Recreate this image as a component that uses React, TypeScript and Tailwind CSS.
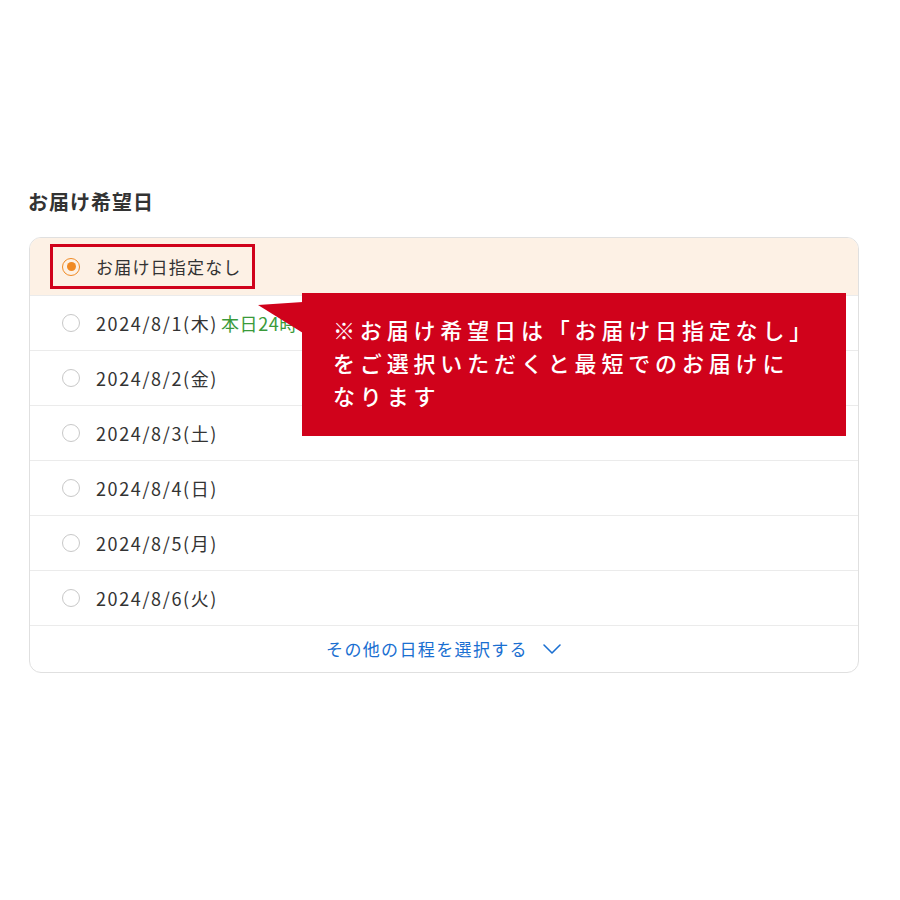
const dates = [
  { label: '2024/8/1(木)', note: '本日24時までのご注文で当日発送' },
  { label: '2024/8/2(金)' },
  { label: '2024/8/3(土)' },
  { label: '2024/8/4(日)' },
  { label: '2024/8/5(月)' },
  { label: '2024/8/6(火)' },
];

function Radio({ checked }: { checked?: boolean }) {
  if (checked) {
    return (
      <span className="w-[18px] h-[18px] rounded-full border-[1.5px] border-[#f08a24] flex items-center justify-center shrink-0">
        <span className="w-[9px] h-[9px] rounded-full bg-[#f08a24]" />
      </span>
    );
  }
  return <span className="w-[18px] h-[18px] rounded-full border-[1.5px] border-[#c8c8c8] shrink-0" />;
}

export default function App() {
  return (
    <div
      className="w-[900px] h-[900px] bg-white text-[#333]"
      style={{ fontFamily: '"Noto Sans CJK JP", "Noto Sans", sans-serif' }}
    >
      <div className="pt-[188px] pl-[28px] pr-[41px]">
        {/* Heading */}
        <h2 className="text-[20px] font-bold leading-[28px] tracking-[0.05em] text-[#333]">お届け希望日</h2>

        <div className="relative mt-[21px] ml-px">
          {/* Card */}
          <div className="rounded-[12px] border border-[#e0e0e0] overflow-hidden">
            <div className="h-[58px] bg-[#fdf1e5] flex items-center pl-5 border-b border-[#ebebeb]">
              <label className="h-[45px] w-[205px] border-[3px] border-[#d0021b] flex items-center pl-[9px] gap-[16px]">
                <Radio checked />
                <span className="text-[17px] tracking-[0.07em]">お届け日指定なし</span>
              </label>
            </div>

            {dates.map((d) => (
              <div key={d.label} className="h-[55px] flex items-center pl-[32px] gap-[16px] border-b border-[#ebebeb]">
                <Radio />
                <span className="text-[18px] tracking-[0.09em] whitespace-nowrap flex items-center">
                  {d.label}
                  {d.note && (
                    <span className="ml-[3px] w-[80px] tracking-[0.03em] overflow-hidden text-[#3a9a3a]">{d.note}</span>
                  )}
                </span>
              </div>
            ))}

            <div className="h-[46px] flex items-center justify-center gap-[14px] text-[#1a6fd1]">
              <span className="text-[17px] tracking-[0.08em]">その他の日程を選択する</span>
              <svg width="20" height="12" viewBox="0 0 20 12" fill="none">
                <polyline points="2,2 10,10 18,2" stroke="#1a6fd1" strokeWidth="1.6" strokeLinecap="round" strokeLinejoin="round" />
              </svg>
            </div>
          </div>

          {/* Callout */}
          <div className="absolute left-[273px] top-[56px] w-[544px] h-[143px] bg-[#d0021b] pl-[31px] pt-[20px]">
            <svg className="absolute left-[-44px] top-0" width="45" height="40" viewBox="0 0 45 40">
              <polygon points="0,12 45,9 45,40" fill="#d0021b" />
            </svg>
            <p className="text-white text-[22px] font-medium leading-[33px] tracking-[0.22em] whitespace-nowrap">
              ※お届け希望日は「お届け日指定なし」
              <br />
              をご選択いただくと最短でのお届けに
              <br />
              なります
            </p>
          </div>
        </div>
      </div>
    </div>
  );
}
